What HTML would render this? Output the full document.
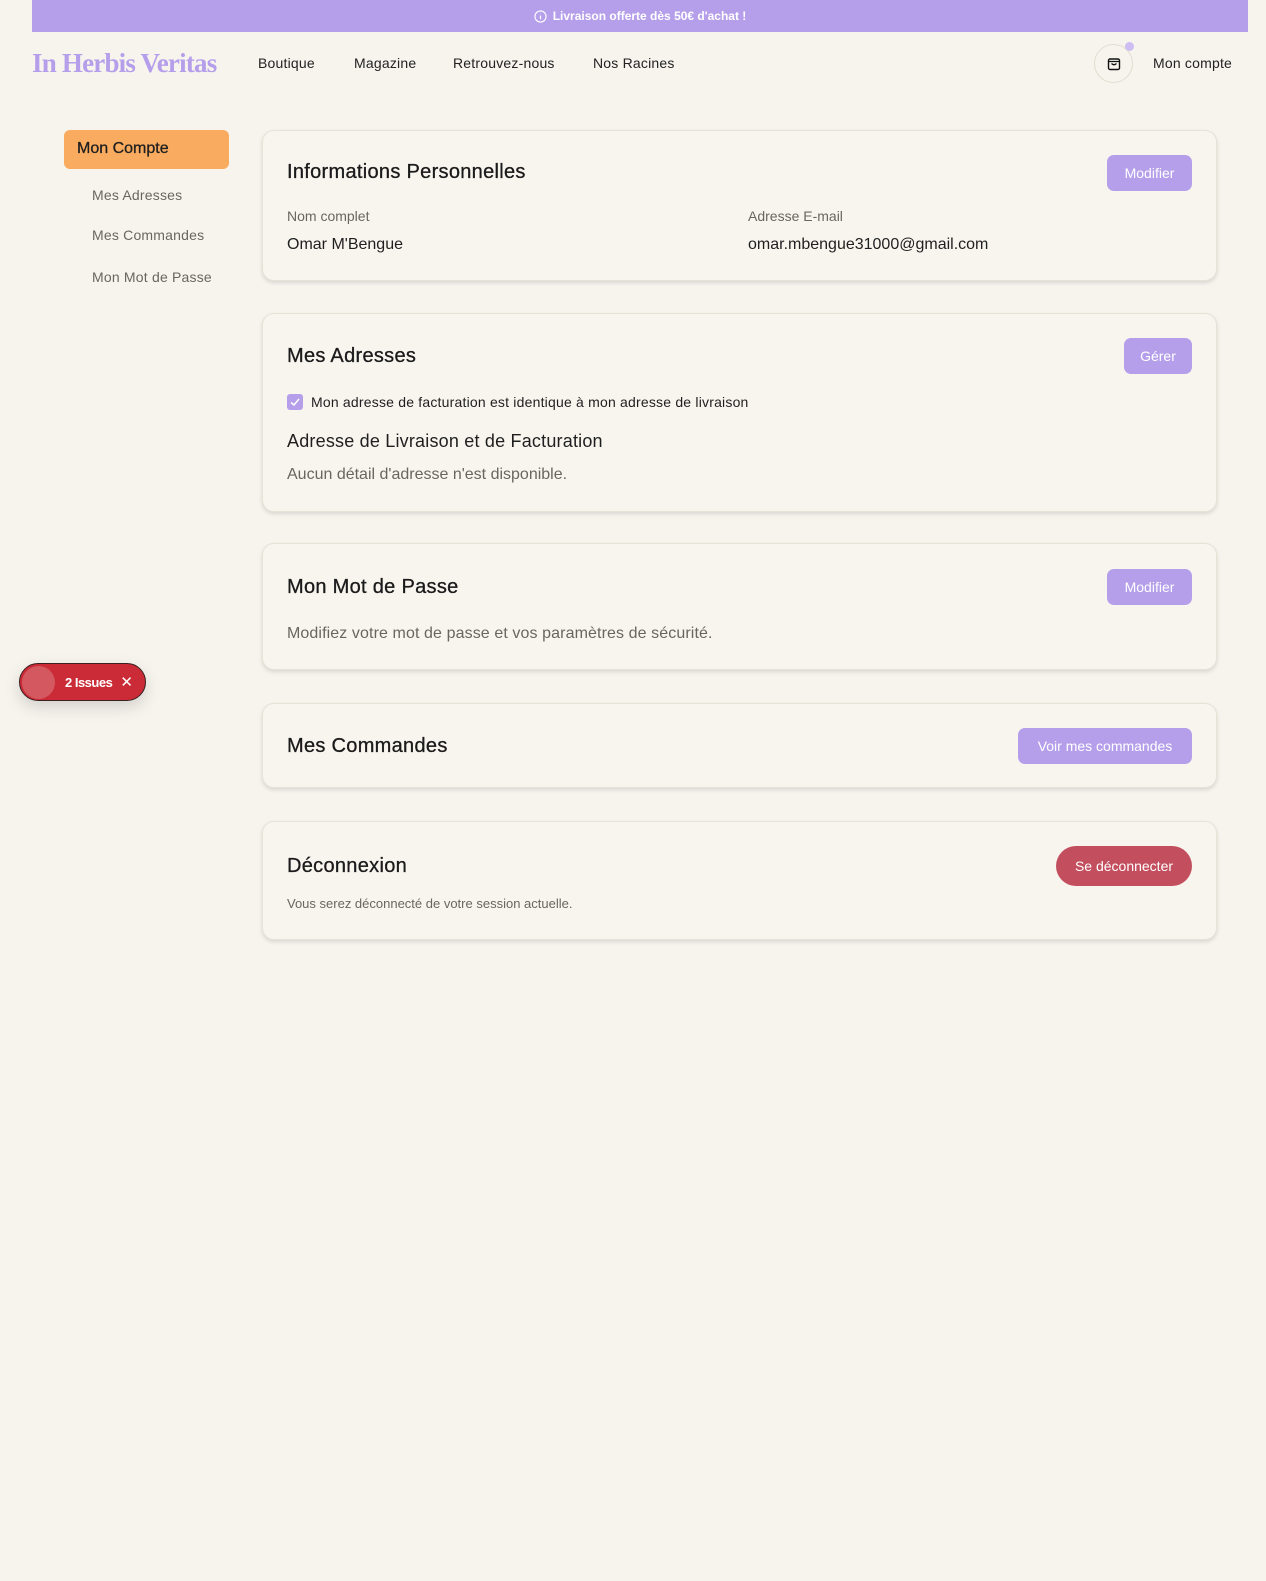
<!DOCTYPE html>
<html><head><meta charset="utf-8"><style>
*{box-sizing:border-box;margin:0;padding:0}
body{width:1266px;height:1581px;background:#f7f4ee;font-family:"Liberation Sans",sans-serif;color:#1f1f1f;position:relative;overflow:hidden}
.a{position:absolute;white-space:nowrap}
.banner{left:32px;top:0;width:1216px;height:32px;background:#b59fea;color:#fff;font-size:12px;font-weight:bold;display:flex;align-items:center;justify-content:center;gap:6px}
.logo{left:32px;top:48px;font-family:"Liberation Serif",serif;font-weight:bold;font-size:27px;color:#b59fea;letter-spacing:-0.8px}
.nav{top:55px;font-size:14px;color:#222;letter-spacing:0.2px}
.card{position:absolute;left:262px;width:955px;border:1px solid #e8e2d6;border-radius:12px;background:#f8f5ef;box-shadow:0 2px 4px rgba(0,0,0,.12)}
.t{font-size:20px;color:#1a1a1a;letter-spacing:0.3px;-webkit-text-stroke:0.3px #1a1a1a}
.btn{position:absolute;background:#b59fea;color:#fff;font-size:14px;border-radius:7px;display:flex;align-items:center;justify-content:center}
.grey{color:#6a6560}
</style></head><body>
<div class="a banner"><svg width="13" height="13" viewBox="0 0 14 14"><circle cx="7" cy="7" r="6" fill="none" stroke="#fff" stroke-width="1.2"/><path d="M7 6v4M7 4v.5" stroke="#fff" stroke-width="1.3"/></svg>Livraison offerte dès 50€ d'achat !</div>
<div class="a logo">In Herbis Veritas</div>
<div class="a nav" style="left:258px">Boutique</div>
<div class="a nav" style="left:354px">Magazine</div>
<div class="a nav" style="left:453px">Retrouvez-nous</div>
<div class="a nav" style="left:593px">Nos Racines</div>
<div class="a" style="left:1094px;top:44px;width:39px;height:39px;border:1px solid #e3ddd0;border-radius:50%;display:flex;align-items:center;justify-content:center"><svg width="14" height="15" viewBox="0 0 14 15"><rect x="1.5" y="3" width="11" height="10.5" rx="1.5" fill="none" stroke="#111" stroke-width="1.4"/><path d="M1.5 5.5h11M4.5 7.5q2.5 2.5 5 0" fill="none" stroke="#111" stroke-width="1.3"/></svg></div>
<div class="a" style="left:1125px;top:42px;width:9px;height:9px;border-radius:50%;background:#cdbdf2"></div>
<div class="a nav" style="left:1153px">Mon compte</div>

<div class="a" style="left:64px;top:130px;width:165px;height:39px;background:#f9ab5f;border-radius:6px;font-size:16px;padding:10px 13px;-webkit-text-stroke:0.3px #1f1f1f">Mon Compte</div>
<div class="a grey" style="left:92px;top:187px;font-size:14px;letter-spacing:0.2px">Mes Adresses</div>
<div class="a grey" style="left:92px;top:227px;font-size:14px;letter-spacing:0.2px">Mes Commandes</div>
<div class="a grey" style="left:92px;top:269px;font-size:14px;letter-spacing:0.2px">Mon Mot de Passe</div>

<div class="card" style="top:130px;height:151px">
<div class="a t" style="left:24px;top:30px">Informations Personnelles</div>
<div class="btn" style="left:844px;top:24px;width:85px;height:36px">Modifier</div>
<div class="a grey" style="left:24px;top:77px;font-size:14px">Nom complet</div>
<div class="a" style="left:24px;top:105px;font-size:16px">Omar M'Bengue</div>
<div class="a grey" style="left:485px;top:77px;font-size:14px">Adresse E-mail</div>
<div class="a" style="left:485px;top:105px;font-size:16px">omar.mbengue31000@gmail.com</div>
</div>

<div class="card" style="top:313px;height:199px">
<div class="a t" style="left:24px;top:31px">Mes Adresses</div>
<div class="btn" style="left:861px;top:24px;width:68px;height:36px">Gérer</div>
<div class="a" style="left:24px;top:80px;width:16px;height:16px;border-radius:3px;background:#b59fea"><svg width="16" height="16"><path d="M4 8.5l3 2.5 5-6" fill="none" stroke="#fff" stroke-width="1.5"/></svg></div>
<div class="a" style="left:48px;top:80px;font-size:14px;letter-spacing:0.2px">Mon adresse de facturation est identique à mon adresse de livraison</div>
<div class="a" style="left:24px;top:117px;font-size:18px;letter-spacing:0.2px">Adresse de Livraison et de Facturation</div>
<div class="a grey" style="left:24px;top:152px;font-size:16px">Aucun détail d'adresse n'est disponible.</div>
</div>

<div class="card" style="top:543px;height:127px">
<div class="a t" style="left:24px;top:32px">Mon Mot de Passe</div>
<div class="btn" style="left:844px;top:25px;width:85px;height:36px">Modifier</div>
<div class="a grey" style="left:24px;top:81px;font-size:16px;letter-spacing:0.1px">Modifiez votre mot de passe et vos paramètres de sécurité.</div>
</div>

<div class="card" style="top:703px;height:85px">
<div class="a t" style="left:24px;top:31px">Mes Commandes</div>
<div class="btn" style="left:755px;top:24px;width:174px;height:36px">Voir mes commandes</div>
</div>

<div class="card" style="top:821px;height:119px">
<div class="a t" style="left:24px;top:33px">Déconnexion</div>
<div class="btn" style="left:793px;top:24px;width:136px;height:40px;background:#c24e5e;border-radius:20px">Se déconnecter</div>
<div class="a grey" style="left:24px;top:74px;font-size:13px">Vous serez déconnecté de votre session actuelle.</div>
</div>

<div class="a" style="left:19px;top:663px;width:127px;height:38px;border-radius:19px;background:#cb2b36;border:1.5px solid #3a2020;box-shadow:0 6px 16px rgba(0,0,0,.15);color:#fff;font-size:13px;font-weight:bold;display:flex;align-items:center">
<div style="width:33px;height:33px;border-radius:50%;background:#d45860;margin-left:2px"></div>
<span style="margin-left:10px;letter-spacing:-0.5px">2 Issues</span><span style="margin-left:8px;font-weight:normal;font-size:15px">✕</span></div>
</body></html>
